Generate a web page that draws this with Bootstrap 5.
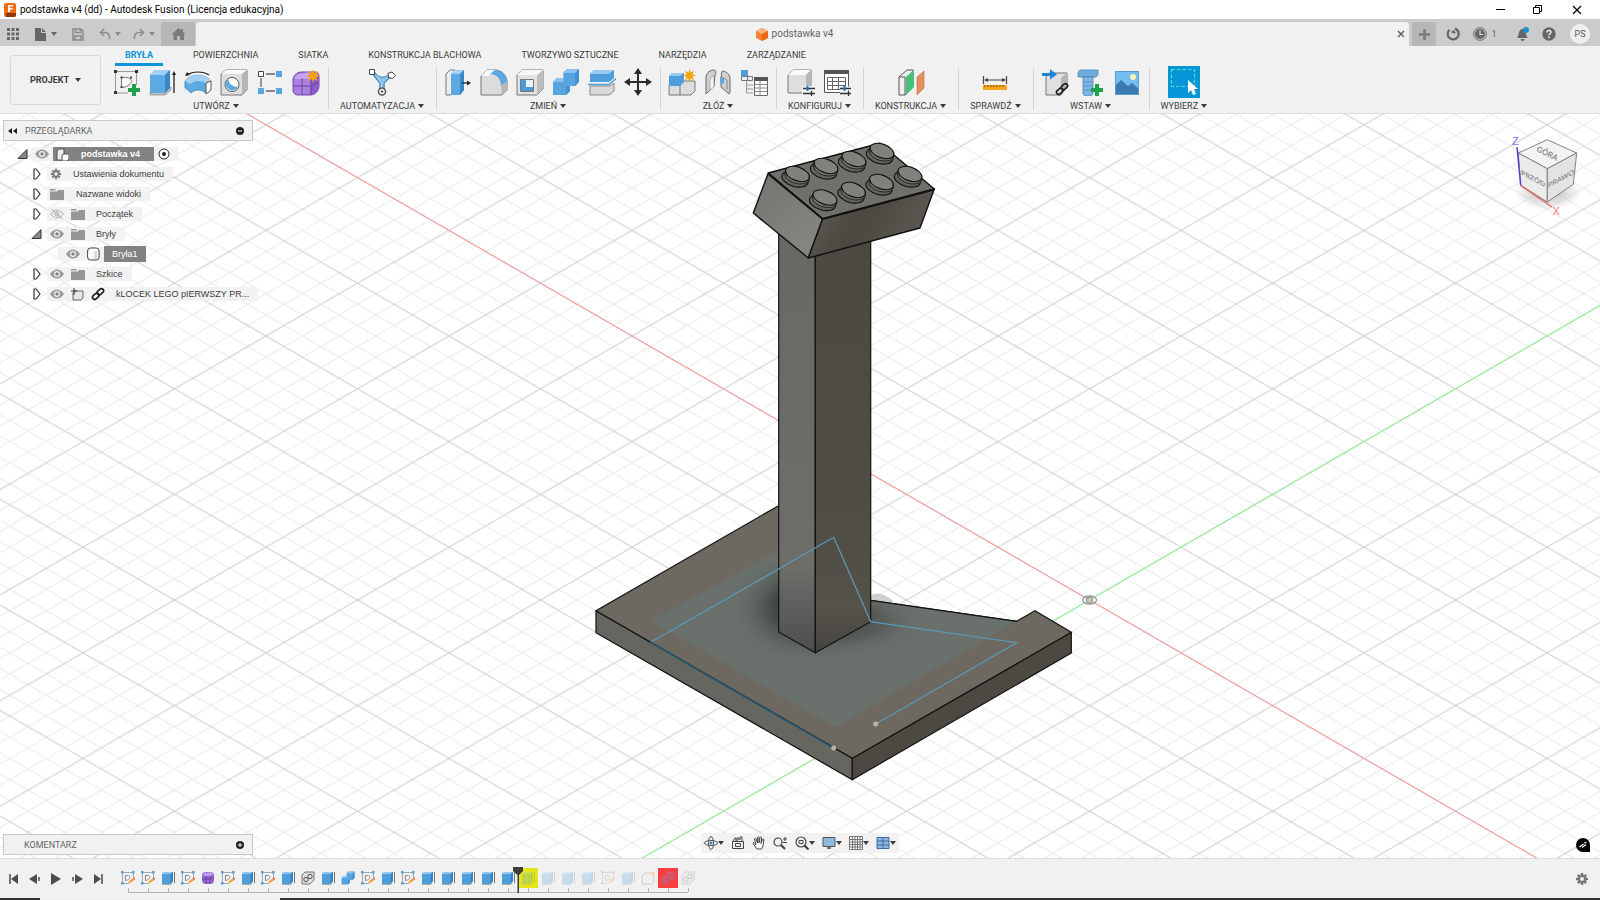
<!DOCTYPE html>
<html lang="pl">
<head>
<meta charset="utf-8">
<meta name="viewport" content="width=device-width, initial-scale=1">
<title>podstawka v4 (dd) - Autodesk Fusion (Licencja edukacyjna)</title>
<link rel="stylesheet" href="https://cdn.jsdelivr.net/npm/bootstrap@5.3.0/dist/css/bootstrap.min.css">
<style>
  :root { --chrome: #f1f1f1; --strip: #cbcbcb; --ink: #3c3c3c; --accent: #0a96d9; }
  body { font-family: Roboto, "Liberation Sans", sans-serif; font-size: 9px; line-height: 12px; color: var(--ink); background: #fff; }
  button { border: 0; background: none; padding: 0; color: inherit; font: inherit; line-height: inherit; display: inline-flex; align-items: center; justify-content: center; flex: none; }
  svg { display: block; flex: none; }
  .tri { width: 0; height: 0; border: 3px solid transparent; border-top: 4px solid currentColor; border-bottom: 0; flex: none; }

  .titlebar { height: 19px; font-size: 10px; line-height: 19px; color: #000; }
  .titlebar .win { width: 38px; height: 19px; }
  .strip { height: 27px; background: var(--strip); padding-top: 3px; color: #666; }
  .strip .slot { width: 26px; }
  .strip .dim { color: #8b8b8b; }
  .hometab { width: 34px; margin-left: 6px; background: #b7b7b7; border-radius: 3px 3px 0 0; color: #7a7a7a; }
  .doctab { background: var(--chrome); border-radius: 4px 4px 0 0; font-size: 10px; margin: 0 3px 0 1px; }
  .newtab { width: 24px; background: #b7b7b7; border-radius: 3px 3px 0 0; color: #7a7a7a; }
  .bell { margin-left: 14px; }
  .avatar { width: 20px; height: 20px; border-radius: 50%; background: #eee; color: #555; margin: 0 10px 0 8px; }

  .ribbon { background: var(--chrome); border-bottom: 1px solid #dcdcdc; height: 68px; }
  .project { width: 91px; height: 50px; border: 1px solid #d9d9d9; border-radius: 3px; font-weight: 700; gap: 6px; margin: 9px 3px 0 10px; }
  .tabs { height: 20px; gap: 20px; padding-left: 11px; }
  .tabs button { padding: 0 10px; height: 20px; border-bottom: 3px solid transparent; }
  .tabs button.on { color: var(--accent); border-color: var(--accent); font-weight: 700; }
  .group { padding-top: 2px; position: relative; }
  .group + .group::before { content: ""; width: 1px; background: #d4d4d4; position: absolute; left: 0; top: 2px; bottom: 3px; }
  .group .tools { gap: 8px; padding: 0 8px; height: 28px; }
  .group .name { gap: 3px; height: 14px; margin-top: 3px; padding: 0 12px; }
  .group .picked { width: 32px; height: 32px; background: #0696d7; margin: -2px 0; }

  .canvas3d > svg.scene { position: absolute; inset: 0; width: 100%; height: 100%; }
  .panelbar { width: 250px; height: 21px; background: var(--chrome); border: 1px solid #c9c9c9; color: #666; padding: 0 8px 0 4px; }
  .browser { position: absolute; left: 3px; top: 6px; }
  .comments { position: absolute; left: 3px; bottom: 3px; }
  .cube { position: absolute; right: 8px; top: 16px; }
  .assist { position: absolute; right: 10px; bottom: 6px; }
  .navtools { position: absolute; left: 44%; bottom: 5px; height: 20px; background: rgba(241,241,241,.9); margin-left: -3px; gap: 7px; padding: 0 3px; }
  .tree { font-family: "Liberation Sans", sans-serif; margin: 3px 0 0; padding: 0; list-style: none; }
  .tree li { height: 20px; display: flex; align-items: center; }
  .tree .lv1 { padding-left: 12px; } .tree .lv2 { padding-left: 26px; } .tree .lv3 { padding-left: 55px; }
  .tree .twist { width: 14px; height: 14px; margin-right: 4px; }
  .tree .lv1 .twist { margin-right: 2px; }
  .tree .cell { background: rgba(241,241,241,.9); height: 14px; display: flex; align-items: center; padding: 0 9px 0 3px; }
  .tree .cell svg { margin-right: 7px; }
  .tree .sel { background: #828282; color: #fff; height: 14px; display: flex; align-items: center; padding: 0 10px 0 3px; }

  .timeline { height: 40px; background: var(--chrome); border-top: 1px solid #dcdcdc; padding: 0 11px 0 3px; color: #4c4c4c; }
  .timeline .play { width: 21px; height: 20px; }
  .timeline .gear { color: #777; }
  .track { margin-left: 10px; position: relative; height: 34px; padding-top: 9px; align-self: flex-start; }
  .track .step { width: 20px; height: 20px; position: relative; }
  .track .step::after { content: ""; position: absolute; left: 10px; top: 20px; width: 1px; height: 4px; background: #b5b5b5; }
  .track::after { content: ""; position: absolute; left: 10px; right: 10px; top: 33px; height: 1px; background: #b5b5b5; }
  .track .later svg { opacity: .25; }
  .track .warn { background: #e3e619; } .track .warn svg, .track .fail svg { opacity: .25; }
  .track .fail { background: #f93e40; }
  .track .marker { position: absolute; left: 395px; top: 8px; z-index: 1; }
  .taskbar { height: 2px; background: linear-gradient(90deg, #333 40px, #eee 40px 280px, #333 280px); }
</style>
</head>
<body class="vh-100 d-flex flex-column overflow-hidden">

<svg width="0" height="0" class="position-absolute" aria-hidden="true">
  <defs>
    <symbol id="i-sketch" viewBox="0 0 28 28">
      <path d="M3 3.500H25M3.500 3V25.500M24.500 3V17M3 25H16" stroke="#999" fill="none"/>
      <path d="M2 2h3v3H2zM23 2h3v3h-3zM2 23h3v3H2z" fill="#333"/>
      <path d="M9.500 19V9.500h4c4 0 6 2 6 4-1 3-5 6-10 6z" fill="#fafafa" stroke="#777"/><path d="M8.500 8.500h2v2h-2zM18 8.500h2v2h-2zM8.500 18h2v2h-2z" fill="#444"/>
      <path d="M20 16h4v4h4v4h-4v4h-4v-4h-4v-4h4z" fill="#21a04a"/></symbol>
    <symbol id="i-extrude" viewBox="0 0 28 28">
      <path d="M2 24v3h15l6-5v-3z" fill="#bdbdbd" stroke="#888" stroke-width=".7"/>
      <path d="M2 7l5-5h15v18l-5 5H2z" fill="#5fa9e2"/><path d="M2 7l5-5h15l-5 5z" fill="#a3d0f2"/><path d="M17 7l5-5v18l-5 5z" fill="#3987c6"/>
      <path d="M26 25V5" stroke="#222" stroke-width="1.300"/><path d="M24 7l2-4 2 4z" fill="#222"/></symbol>
    <symbol id="i-revolve" viewBox="0 0 28 28">
      <path d="M1 13c6-7 19-8 26 0l-5 12c-5-4-11-4-15 0-1-1-4-4-6-5z" fill="#5fa9e2" stroke="#3579ae" stroke-width=".7"/>
      <path d="M1 13c6-7 19-8 26 0l-4 3c-5-4-12-4-17 0z" fill="#a3d0f2"/><path d="M22 15l5-2v9l-5 4z" fill="#fff" stroke="#555"/>
      <path d="M3 7c6-4 16-4 22 0" stroke="#222" fill="none" stroke-width="1.200"/><path d="M1 8l2-4 3 3z" fill="#222"/></symbol>
    <symbol id="i-hole" viewBox="0 0 28 28">
      <path d="M1 6l5-4h21v20l-5 5H1z" fill="#dedede" stroke="#777"/><path d="M1 6l5-4h21l-5 4z" fill="#fafafa"/><path d="M22 6l5-4v20l-5 5z" fill="#b5b5b5"/>
      <circle cx="12" cy="16.500" r="7" fill="#fff" stroke="#555"/><path d="M8 11a6.500 6.500 0 1 0 10 8c-5 0-9-3-10-8z" fill="#5fa9e2"/></symbol>
    <symbol id="i-pattern" viewBox="0 0 28 28">
      <path d="M5 10v9M10 6h9M10 23h9" stroke="#666" stroke-width="1.300"/><path d="M2.500 3.500h5v5h-5z" fill="#fff" stroke="#444"/>
      <path d="M20 3h6v6h-6zM2 20h6v6H2zM20 20h6v6h-6z" fill="#58a6dd"/></symbol>
    <symbol id="i-form" viewBox="0 0 28 28">
      <path d="M1 11c1-5 5-7 9-7h13c3 0 4 2 4 5v9c0 5-4 9-9 9H6c-3 0-5-2-5-5z" fill="#a97fe0" stroke="#7448ad"/>
      <path d="M3 9c3-4 16-6 23-3-2 4-4 5-7 5H5c-2 0-2-1-2-2z" fill="#c7a6f0"/><path d="M19 11c4-1 6-3 8-5v12c0 5-4 9-9 9z" fill="#8b5bcb"/>
      <path d="M10 10v17M1 18h18l8-4M19 10v17" stroke="#6d43a5" fill="none"/></symbol>
    <symbol id="i-star" viewBox="0 0 14 14"><path d="M7 0l1.300 3.900L12 2l-1.900 3.700L14 7l-3.900 1.300L12 12 8.300 10.100 7 14 5.700 10.100 2 12l1.900-3.700L0 7l3.900-1.300L2 2l3.700 1.900z" fill="#f5a30b"/></symbol>
    <symbol id="i-auto" viewBox="0 0 28 28">
      <path d="M4 5l8 10v8M24 7l-8 8v8M6 4c5 7 11 7 16 2" stroke="#3b86bd" stroke-width="1.400" fill="none"/>
      <path d="M5 5l8 9 1 8 2-8 7-7-9 3z" fill="#8ac1ea"/>
      <path d="M1.500 1.500h5v5h-5z" fill="#fff" stroke="#444"/><path d="M24 4l3.500 3.500-3 3-4-1-.5-4z" fill="#fff" stroke="#444"/>
      <circle cx="14" cy="23.500" r="3.500" fill="#fff" stroke="#555" stroke-width="1.500"/><circle cx="14" cy="23.500" r="1.200" fill="#555"/></symbol>
    <symbol id="i-press" viewBox="0 0 28 28">
      <path d="M2 6l4-4h5v20l-4 5H2z" fill="#eee" stroke="#777"/><path d="M7 6l4-4h9v20l-4 5H7z" fill="#5fa9e2"/><path d="M7 6l4-4h9l-4 4z" fill="#a3d0f2"/><path d="M16 6l4-4v20l-4 5z" fill="#3987c6"/>
      <path d="M18 15h6" stroke="#222" stroke-width="1.300"/><path d="M23 12.500l4 2.500-4 2.500z" fill="#222"/></symbol>
    <symbol id="i-fillet" viewBox="0 0 28 28">
      <path d="M1 8l6-6h8c7 0 12 6 12 12v8l-5 5H1z" fill="#dcdcdc" stroke="#777"/><path d="M1 8l6-6h8l-6 6z" fill="#fafafa"/>
      <path d="M10 6l5-4c7 0 12 6 12 12l-6 4c0-7-4-12-11-12z" fill="#5fa9e2"/><path d="M21 18l6-4v8l-5 5z" fill="#b8b8b8"/></symbol>
    <symbol id="i-shell" viewBox="0 0 28 28">
      <path d="M1 7l5-5h21v19l-6 6H1z" fill="#e2e2e2" stroke="#777"/><path d="M21 7l6-5v19l-6 6z" fill="#bdbdbd"/><path d="M1 7l5-5h21l-6 5z" fill="#f7f7f7"/>
      <path d="M4.500 11.500h13v12h-13z" fill="#fff" stroke="#777"/><path d="M5 12h5v7h7v4H5z" fill="#4f9bd5"/><path d="M10 12h7v7h-7z" fill="#e9f4fc"/></symbol>
    <symbol id="i-combine" viewBox="0 0 28 28">
      <path d="M1 14l4-4h6V5l4-4h12v13l-4 4h-5v5l-4 4H1z" fill="#58a4df"/><path d="M1 14l4-4h6V5l4-4h12l-4 4H12v5l-1 4z" fill="#8cc3ee"/><path d="M23 5l4-4v13l-4 4h-5v5l-4 4v-9h9z" fill="#4492d2"/></symbol>
    <symbol id="i-split" viewBox="0 0 28 28">
      <path d="M2 18v9h19l5-4v-8l-4 3z" fill="#d9d9d9" stroke="#888"/><path d="M2 6l4-4h20v8l-5 4H2z" fill="#4d9edb"/><path d="M2 6l4-4h20l-5 4z" fill="#99caf0"/>
      <path d="M0 16.500h21l7-6" stroke="#4d9edb" stroke-width="1.400" fill="none"/></symbol>
    <symbol id="i-move" viewBox="0 0 28 28">
      <path d="M14 5v18M5 14h18" stroke="#2b2b2b" stroke-width="2"/><path d="M14 0l4 6h-8zM14 28l4-6h-8zM0 14l6-4v8zM28 14l-6-4v8z" fill="#2b2b2b"/></symbol>
    <symbol id="i-newcomp" viewBox="0 0 28 28">
      <path d="M12 17l4-4h11v10l-4 4H1V17z" fill="#dcdcdc" stroke="#777"/><path d="M12 17v10" stroke="#777"/>
      <path d="M1 8l3-3h12v9l-4 4H1z" fill="#4d9edb"/><path d="M1 8l3-3h12l-4 3z" fill="#99caf0"/></symbol>
    <symbol id="i-joint" viewBox="0 0 28 28">
      <path d="M2 10c0-5 3-7 7-8 4 0 3 3 2 5l-1 11-6 6-2 2z" fill="#d0d0d0" stroke="#666"/><path d="M6 11l4-4v12l-4 3z" fill="#f5f5f5" stroke="#888" stroke-width=".6"/>
      <path d="M26 10c-1-5-4-6-7-7-2 0-1 3-2 6v10l8 7 1-2z" fill="#d0d0d0" stroke="#666"/><path d="M18 9l5 3v10" fill="none" stroke="#888"/><path d="M16 10h4v5l-3 2z" fill="#58a6dd"/></symbol>
    <symbol id="i-bom" viewBox="0 0 28 28">
      <path d="M1 2h7v6H1z" fill="#4d9edb"/><path d="M1.500 8.500h6v4h-6zM7.500 8.500h5v4h-5z" fill="#eee" stroke="#777"/>
      <path d="M6.500 13v12M7 17h6M7 21h6M7 25h6" stroke="#999" fill="none"/><path d="M14.500 9.500h13v18h-13z" fill="#fff" stroke="#666"/><path d="M14 9h14v4H14z" fill="#555"/><path d="M15 16.500h12M15 20h12M15 23.500h12M20 13v14" stroke="#888"/></symbol>
    <symbol id="i-cfg" viewBox="0 0 28 28">
      <path d="M1 7l5-5h18v16l-5 7H1z" fill="#dedede" stroke="#777"/><path d="M1 7l5-5h18l-5 5z" fill="#fafafa"/><path d="M19 7l5-5v16l-5 7z" fill="#b8b8b8"/>
      <path d="M15 20.500h13M15 25.500h13" stroke="#f1f1f1" stroke-width="5"/><path d="M16 20.500h12M16 25.500h12M24.500 23v5" stroke="#333" stroke-width="1.300"/><path d="M20.500 18v5" stroke="#0a7fd0" stroke-width="2"/></symbol>
    <symbol id="i-cfgtab" viewBox="0 0 28 28">
      <path d="M1.500 2.500h24v22h-24z" fill="#fff" stroke="#555"/><path d="M1 2h25v4H1z" fill="#555"/><path d="M4.500 9.500h18v12h-18zM4 13.500h18M4 17.500h18M9.500 9v12M15.500 9v12" fill="none" stroke="#666"/>
      <path d="M17 20.500h11M17 25.500h11" stroke="#f1f1f1" stroke-width="4"/><path d="M17 20.500h11M17 25.500h11M25.500 23v5" stroke="#333" stroke-width="1.300"/><path d="M21.500 18v5" stroke="#0a7fd0" stroke-width="2"/></symbol>
    <symbol id="i-plane" viewBox="0 0 28 28">
      <path d="M2 9l8-7h6v17l-8 8H2z" fill="#eee" stroke="#555"/><path d="M2 9h6v18" fill="none" stroke="#555"/><path d="M9 9l8-7v17l-8 8z" fill="#45c07a"/><path d="M20 9l7-6v17l-7 7z" fill="#e2905c" stroke="#b96c3c" stroke-width=".6"/></symbol>
    <symbol id="i-measure" viewBox="0 0 28 28">
      <path d="M2.500 8v8M25.500 8v8M4 12h20" stroke="#444" stroke-width="1.200"/><path d="M3 12l4-2v4zM25 12l-4-2v4z" fill="#444"/><path d="M2 17h24v5H2z" fill="#f5a51a"/><path d="M4 17v2M7 17v2M10 17v2M13 17v2M16 17v2M19 17v2M22 17v2" stroke="#7a4b00"/></symbol>
    <symbol id="i-chain" viewBox="0 0 14 14"><g fill="none" stroke="currentColor" stroke-width="1.700"><rect x="-3.600" y="-2" width="7.200" height="4.200" rx="2.100" transform="translate(9.300 4.700) rotate(-42)"/><rect x="-3.600" y="-2" width="7.200" height="4.200" rx="2.100" transform="translate(4.700 9.200) rotate(-42)"/></g></symbol>
    <symbol id="i-derive" viewBox="0 0 28 28">
      <path d="M5 9l3-4h18v13l-6 9H5z" fill="#e0e0e0" stroke="#777"/><path d="M20 10l6-5v13l-6 8z" fill="#b5b5b5"/><path d="M1 5h8V1l7 5.500-7 5V8H1z" fill="#1b87d6"/></symbol>
    <symbol id="i-bolt" viewBox="0 0 28 28">
      <path d="M1 4l2-2h18v5l-2 2H1z" fill="#6fabdb" stroke="#3f7db0" stroke-width=".7"/><path d="M6 9h10v17l-2 2H8l-2-2z" fill="#7fb6e3" stroke="#3f7db0" stroke-width=".7"/><path d="M6 14h10M6 18h10M6 22h10" stroke="#5793c4"/>
      <path d="M18 16h4v4h4v4h-4v4h-4v-4h-4v-4h4z" fill="#21a04a"/></symbol>
    <symbol id="i-image" viewBox="0 0 28 28">
      <path d="M2 3h24v24H2z" fill="#74bdf0"/><path d="M2 18l6-6 7 6 4-3 7 6v6H2z" fill="#3a7ab0"/><circle cx="20" cy="9" r="3" fill="#fff2b8"/><path d="M2.500 3.500h23v23h-23z" fill="none" stroke="#5a9cce"/></symbol>
    <symbol id="i-pick" viewBox="0 0 32 32"><path d="M3.500 3.500h23v17h-23z" fill="none" stroke="#55e0c0" stroke-width="1.200" stroke-dasharray="3.500 2"/><path d="M20 14v13l3-3 2 5 3-1-2-5h4z" fill="#fff"/></symbol>

    <symbol id="t-sketch" viewBox="0 0 14 14"><path d="M1.500 1.500h11M1.500 1.500v11M12.500 1.500v5M1.500 12.500h6" stroke="#9ab" fill="none"/><path d="M0 0h2.500v2.500H0zM11 0h2.500v2.500H11zM0 11h2.500v2.500H0z" fill="#5aa3c9"/><path d="M4.500 9.500v-5h3c2 1 2 4-3 5z" stroke="#888" fill="#fff"/><path d="M7 13l1-3 4-3 1.500 2L9 12z" fill="#f2a13c"/><path d="M12 7l1-1 1 2-1 1z" fill="#d34a3c"/></symbol>
    <symbol id="t-ext" viewBox="0 0 14 14"><path d="M1 12v2h8l3-2z" fill="#aaa"/><path d="M1 3l2-2h9v9l-3 3H1z" fill="#4d9edb"/><path d="M1 3l2-2h9L9.500 3z" fill="#92c6ee"/><path d="M9.500 3L12 1v9l-2.500 3z" fill="#3785c6"/><path d="M13.500 1v11" stroke="#777"/></symbol>
    <symbol id="t-form" viewBox="0 0 14 14"><rect x="1" y="1" width="12" height="12" rx="4" fill="#9465d2"/><path d="M2 4c2-3 8-3 10-1L9 5H3z" fill="#c5a2ee"/><path d="M1 8h8l4-2M5 5v8M9 5v8" stroke="#613a9b" stroke-width=".8" fill="none"/></symbol>
    <symbol id="t-link" viewBox="0 0 14 14"><path d="M1 4l3-3h9v8l-4 4H1z" fill="#ddd" stroke="#777"/><circle cx="5" cy="8.500" r="2.200" fill="none" stroke="#555"/><circle cx="9" cy="5.500" r="2.200" fill="none" stroke="#555"/></symbol>
    <symbol id="t-fillet" viewBox="0 0 14 14"><path d="M1 5l3-3h3c4 0 6 3 6 6v3l-2 2H1z" fill="#eee" stroke="#666"/><path d="M10 1h4v4h-4z" fill="#f5a30b"/></symbol>

    <symbol id="b-eye" viewBox="0 0 14 10"><path d="M0 5c4-6 10-6 14 0-4 6-10 6-14 0z" fill="#9a9a9a"/><circle cx="7" cy="5" r="3" fill="#f4f4f4"/><circle cx="7" cy="5" r="1.800" fill="#858585"/></symbol>
    <symbol id="b-eyeoff" viewBox="0 0 14 10"><path d="M.7 5c4-5 8.600-5 12.600 0-4 5-8.600 5-12.600 0z" fill="none" stroke="#aaa"/><circle cx="7" cy="5" r="2" fill="none" stroke="#aaa"/><path d="M1.500 0l11 10" stroke="#aaa"/></symbol>
    <symbol id="b-folder" viewBox="0 0 14 12"><path d="M0 1h5l1 1.500H0zM0 3.500h7L8 2h6v10H0z" fill="#969696"/></symbol>
    <symbol id="b-closed" viewBox="0 0 14 14"><path d="M5 2v10h2l4-5-4-5z" fill="#fff" stroke="#333" stroke-width="1.200"/></symbol>
    <symbol id="b-open" viewBox="0 0 14 14"><path d="M12 2.500v9H3z" fill="#888" stroke="#333"/></symbol>
    <symbol id="b-gear" viewBox="0 0 14 14"><g stroke="currentColor" stroke-width="2.500"><path d="M7 1v12M1 7h12M2.800 2.800l8.400 8.400M11.200 2.800l-8.400 8.400"/></g><circle cx="7" cy="7" r="4" fill="currentColor"/><circle cx="7" cy="7" r="2" fill="#f1f1f1"/></symbol>

    <pattern id="grid" patternUnits="userSpaceOnUse" x="1089.500" y="600" width="183" height="105.600">
      <path stroke="#eaeaea" fill="none" d="M0 84.480L36.600 105.600M0 63.360L73.200 105.600M0 42.240L109.800 105.600M0 21.120L146.400 105.600M36.600 0L183 84.480M73.200 0L183 63.360M109.800 0L183 42.240M146.400 0L183 21.120M36.600 0L0 21.120M73.200 0L0 42.240M109.800 0L0 63.360M146.400 0L0 84.480M183 21.120L36.600 105.600M183 42.240L73.200 105.600M183 63.360L109.800 105.600M183 84.480L146.400 105.600"/>
      <path stroke="#c8c8c8" fill="none" d="M0 0L183 105.600M183 0L0 105.600"/>
    </pattern>
    <linearGradient id="colL" x2="0" y2="1"><stop offset="0" stop-color="#686964"/><stop offset=".8" stop-color="#6d6e6a"/><stop offset="1" stop-color="#4d4e4b"/></linearGradient>
    <linearGradient id="colR" x2="0" y2="1"><stop offset="0" stop-color="#4d4841"/><stop offset=".75" stop-color="#514d47"/><stop offset=".9" stop-color="#55514b"/><stop offset="1" stop-color="#454340"/></linearGradient>
    <linearGradient id="brickL" x2=".6" y2="1"><stop offset="0" stop-color="#73746f"/><stop offset="1" stop-color="#85867f"/></linearGradient>
    <linearGradient id="brickR" x2="1" y2=".3"><stop offset="0" stop-color="#5f5d57"/><stop offset=".5" stop-color="#4c4740"/><stop offset="1" stop-color="#5b5852"/></linearGradient>
    <radialGradient id="shade"><stop offset="0" stop-color="#303434"/><stop offset=".4" stop-color="#3c4040" stop-opacity=".85"/><stop offset=".7" stop-color="#555b58" stop-opacity=".35"/><stop offset="1" stop-color="#6b726c" stop-opacity="0"/></radialGradient>
    <clipPath id="topclip"><path d="M651 621L778.700 550V505H815V590L870.700 600.300 1016.700 621.300 835 727.300z"/></clipPath>
    <g id="stud" stroke="#111" stroke-width="1.100">
      <ellipse cx="-1" cy="5.500" rx="13.500" ry="7.500" transform="rotate(16)" fill="#62635d"/>
      <path d="M-12-4L-12.500 1C-10 9 4 12.500 11 8L12 4z" fill="#74756e" stroke-width=".8"/>
      <ellipse rx="12.500" ry="6.800" transform="rotate(20)" fill="#80817a"/>
    </g>
  </defs>
</svg>

<header>
  <div class="titlebar d-flex align-items-center bg-white">
    <svg width="12" height="14" viewBox="0 0 12 14" class="ms-1 me-1"><rect width="12" height="14" rx="2" fill="#ef6c13"/><path d="M2 10h10v2a2 2 0 0 1-2 2H2z" fill="#8e3a06"/><path d="M4 2h5v1.500H6V5h2.500v1.500H6V9H4z" fill="#fff"/></svg>
    <span class="flex-grow-1 text-nowrap">podstawka v4 (dd) - Autodesk Fusion (Licencja edukacyjna)</span>
    <button class="win" aria-label="Minimalizuj"><svg width="10" height="10"><path d="M0 4.500h9" stroke="#000"/></svg></button>
    <button class="win" aria-label="Przywróć"><svg width="12" height="10" viewBox="1 1 12 10"><path d="M1.500 3.500h6v6h-6zM3.500 3V1.500h6v6H8" stroke="#000" fill="none"/></svg></button>
    <button class="win me-1" aria-label="Zamknij"><svg width="10" height="10"><path d="M1 1l8 8M9 1L1 9" stroke="#000" stroke-width="1.200"/></svg></button>
  </div>

  <div class="strip d-flex align-items-stretch">
    <button class="slot" aria-label="Panel danych"><svg width="12" height="12" fill="currentColor"><path d="M0 0h3v3H0zM4.500 0h3v3h-3zM9 0h3v3H9zM0 4.500h3v3H0zM4.500 4.500h3v3h-3zM9 4.500h3v3H9zM0 9h3v3H0zM4.500 9h3v3h-3zM9 9h3v3H9z"/></svg></button>
    <button class="ms-2 gap-1" aria-label="Plik"><svg width="13" height="14"><path d="M1 1h6v5h5v8H1zM8 1l4 4H8z" fill="currentColor"/></svg><span class="tri"></span></button>
    <button class="slot dim ms-2" aria-label="Zapisz"><svg width="12" height="13"><path d="M1 1h8l2 2v9H1zM3.500 1v3.500h5V1M3 12V8h6v4" stroke="currentColor" stroke-width="1.500" fill="none"/></svg></button>
    <button class="dim ms-2 gap-1" aria-label="Cofnij"><svg width="12" height="12"><path d="M5 1L1.500 4.500 5 8M2 4.500h4c3 0 5 2 4.500 6.500" stroke="currentColor" stroke-width="1.500" fill="none"/></svg><span class="tri"></span></button>
    <button class="dim ms-2 gap-1 ps-1" aria-label="Ponów"><svg width="12" height="12"><path d="M7 1l3.500 3.500L7 8M10 4.500H6C3 4.500 1 6.500 1.500 11" stroke="currentColor" stroke-width="1.500" fill="none"/></svg><span class="tri"></span></button>
    <button class="hometab" aria-label="Strona główna"><svg width="13" height="12"><path d="M0 6l6.500-6L9 2.200V1h2v3l2 2-1 1v5H8V8H5v4H1.500V7z" fill="currentColor"/></svg></button>
    <div class="doctab flex-grow-1 d-flex align-items-center">
      <button class="flex-grow-1 gap-1"><svg width="12" height="13"><path d="M6 0l6 3v7l-6 3-6-3V3z" fill="#f58233"/><path d="M6 0l6 3-6 3-6-3z" fill="#fbb37c"/><path d="M6 6l6-3v7l-6 3z" fill="#ee6716"/></svg>podstawka v4</button>
      <button class="px-1" aria-label="Zamknij kartę"><svg width="8" height="8"><path d="M1 1l6 6M7 1L1 7" stroke="#555" stroke-width="1.200"/></svg></button>
    </div>
    <button class="newtab" aria-label="Nowa karta"><svg width="11" height="11"><path d="M5.500 0v11M0 5.500h11" stroke="currentColor" stroke-width="2.500"/></svg></button>
    <button class="slot ms-1" aria-label="Rozszerzenia"><svg width="14" height="14"><path d="M10.500 2.500A5.500 5.500 0 1 1 3.500 2.800M9 1.500A5.500 5.500 0 0 1 12.500 7" stroke="currentColor" stroke-width="2.200" fill="none"/><path d="M5 5l3-2 2 3-3 .5z" fill="currentColor"/></svg></button>
    <button class="slot gap-1 ms-1 ps-1" aria-label="Stan zadań"><svg width="14" height="14"><circle cx="7" cy="7" r="6.300" fill="none" stroke="currentColor"/><circle cx="7" cy="7" r="5" fill="currentColor"/><path d="M7 3.500V7.500h3" stroke="#ddd" stroke-width="1.200" fill="none"/></svg>1</button>
    <button class="slot bell" aria-label="Powiadomienia"><svg width="14" height="14"><path d="M1 11c2-2 1-8 5-9 5 0 3 7 6 9zM4.500 12h4a2 2 0 0 1-4 0z" fill="currentColor"/><circle cx="10" cy="3" r="3" fill="#1793d1"/></svg></button>
    <button class="slot" aria-label="Pomoc"><svg width="14" height="14"><circle cx="7" cy="7" r="6.700" fill="currentColor"/><path d="M5 5.500C5 2.800 9 3 9 5.300 9 6.800 7 6.800 7 8.500M7 9.500v1.700" stroke="#eee" stroke-width="1.500" fill="none"/></svg></button>
    <button class="avatar align-self-center" aria-label="Profil">PS</button>
  </div>

  <div class="ribbon d-flex">
    <button class="project">PROJEKT <span class="tri"></span></button>
    <div class="flex-grow-1">
      <nav class="tabs d-flex" aria-label="Karty wstążki">
        <button class="on">BRYŁA</button><button>POWIERZCHNIA</button><button>SIATKA</button><button>KONSTRUKCJA BLACHOWA</button><button>TWORZYWO SZTUCZNE</button><button>NARZĘDZIA</button><button>ZARZĄDZANIE</button>
      </nav>
      <div class="d-flex">
        <div class="group d-flex flex-column align-items-center">
          <div class="tools d-flex">
            <button aria-label="Utwórz szkic"><svg width="28" height="28"><use href="#i-sketch"/></svg></button>
            <button aria-label="Wyciągnięcie"><svg width="28" height="28"><use href="#i-extrude"/></svg></button>
            <button aria-label="Obrót"><svg width="28" height="28"><use href="#i-revolve"/></svg></button>
            <button aria-label="Otwór"><svg width="28" height="28"><use href="#i-hole"/></svg></button>
            <button aria-label="Szyk"><svg width="28" height="28"><use href="#i-pattern"/></svg></button>
            <button aria-label="Forma"><svg width="28" height="28"><use href="#i-form"/><use href="#i-star" x="14" y="1" width="14" height="14"/></svg></button>
          </div><button class="name">UTWÓRZ<span class="tri"></span></button>
        </div>
        <div class="group d-flex flex-column align-items-center">
          <div class="tools d-flex"><button aria-label="Automatyzacja"><svg width="28" height="28"><use href="#i-auto"/></svg></button></div>
          <button class="name">AUTOMATYZACJA<span class="tri"></span></button>
        </div>
        <div class="group d-flex flex-column align-items-center">
          <div class="tools d-flex">
            <button aria-label="Naciśnij/ciągnij"><svg width="28" height="28"><use href="#i-press"/></svg></button>
            <button aria-label="Zaokrąglenie"><svg width="28" height="28"><use href="#i-fillet"/></svg></button>
            <button aria-label="Skorupa"><svg width="28" height="28"><use href="#i-shell"/></svg></button>
            <button aria-label="Połącz"><svg width="28" height="28"><use href="#i-combine"/></svg></button>
            <button aria-label="Podziel"><svg width="28" height="28"><use href="#i-split"/></svg></button>
            <button aria-label="Przesuń"><svg width="28" height="28"><use href="#i-move"/></svg></button>
          </div><button class="name">ZMIEŃ<span class="tri"></span></button>
        </div>
        <div class="group d-flex flex-column align-items-center">
          <div class="tools d-flex">
            <button aria-label="Nowy komponent"><svg width="28" height="28"><use href="#i-newcomp"/><use href="#i-star" x="15" y="1" width="13" height="13"/></svg></button>
            <button aria-label="Połączenie"><svg width="28" height="28"><use href="#i-joint"/></svg></button>
            <button aria-label="Lista części"><svg width="28" height="28"><use href="#i-bom"/></svg></button>
          </div><button class="name">ZŁÓŻ<span class="tri"></span></button>
        </div>
        <div class="group d-flex flex-column align-items-center">
          <div class="tools d-flex">
            <button aria-label="Konfiguracja"><svg width="28" height="28"><use href="#i-cfg"/></svg></button>
            <button aria-label="Tabela konfiguracji"><svg width="28" height="28"><use href="#i-cfgtab"/></svg></button>
          </div><button class="name">KONFIGURUJ<span class="tri"></span></button>
        </div>
        <div class="group d-flex flex-column align-items-center">
          <div class="tools d-flex"><button aria-label="Płaszczyzna"><svg width="28" height="28"><use href="#i-plane"/></svg></button></div>
          <button class="name">KONSTRUKCJA<span class="tri"></span></button>
        </div>
        <div class="group d-flex flex-column align-items-center">
          <div class="tools d-flex"><button aria-label="Zmierz"><svg width="28" height="28"><use href="#i-measure"/></svg></button></div>
          <button class="name">SPRAWDŹ<span class="tri"></span></button>
        </div>
        <div class="group d-flex flex-column align-items-center">
          <div class="tools d-flex">
            <button aria-label="Wstaw pochodną"><svg width="28" height="28" color="#222"><use href="#i-derive"/><use href="#i-chain" x="14" y="14" width="14" height="14"/></svg></button>
            <button aria-label="Wstaw łącznik"><svg width="28" height="28"><use href="#i-bolt"/></svg></button>
            <button aria-label="Wstaw obraz"><svg width="28" height="28"><use href="#i-image"/></svg></button>
          </div><button class="name">WSTAW<span class="tri"></span></button>
        </div>
        <div class="group d-flex flex-column align-items-center">
          <div class="tools d-flex"><button class="picked" aria-label="Wybierz"><svg width="32" height="32"><use href="#i-pick"/></svg></button></div>
          <button class="name">WYBIERZ<span class="tri"></span></button>
        </div>
      </div>
    </div>
  </div>
</header>

<main class="canvas3d flex-grow-1 position-relative overflow-hidden">
  <svg class="scene" viewBox="0 114 1600 744" preserveAspectRatio="xMidYMid slice" role="img" aria-label="Model podstawka v4">
    <rect x="-400" y="-200" width="2400" height="1400" fill="url(#grid)"/>
    <path d="M-8.500-33.600L2004.500 1128" stroke="#ff9292" fill="none"/>
    <path d="M-8.500 1233.600L1821.500 177.600" stroke="#85f585" fill="none"/>
    <g fill="none" stroke="#999" stroke-width="1.300"><ellipse cx="1089.500" cy="600" rx="7" ry="4"/><ellipse cx="1089.500" cy="600" rx="3" ry="2.500"/></g>
    <path d="M870 596c6-5 16-2 24 6l-24 2z" fill="#bbb" opacity=".7"/>
    <!-- base plate -->
    <g stroke="#111" stroke-width="1.200" stroke-linejoin="round">
      <path d="M596 610.700L852.300 758.300V779.700L596 632.700z" fill="#65665f"/>
      <path d="M852.300 758.300L1071.300 632.300V653L852.300 779.700z" fill="#4c4943"/>
      <path d="M596 610.700L778.700 505.700 870 560V600.300L1016.700 621.300 1035 610.700 1071.300 632.300 852.300 758.300z" fill="#6d6860"/>
    </g>
    <g clip-path="url(#topclip)"><rect x="640" y="490" width="400" height="250" fill="#6a706b"/>
      <ellipse cx="808" cy="608" rx="86" ry="62" fill="url(#shade)"/><ellipse cx="850" cy="622" rx="85" ry="38" fill="url(#shade)" opacity=".45"/></g>
    <path d="M870.700 600.300L1016.700 621.300" stroke="#111" stroke-width="1.200"/>
    <!-- column -->
    <g stroke="#111" stroke-width="1.200">
      <path d="M778.700 232L815.300 250V652.700L778.700 632z" fill="url(#colL)"/>
      <path d="M815.300 250L870.700 235V621.700L815.300 652.700z" fill="url(#colR)"/>
    </g>
    <!-- brick -->
    <g stroke="#111" stroke-width="1.400" stroke-linejoin="round">
      <path d="M768.300 173L822.700 218.700 808.300 258 753.300 213z" fill="url(#brickL)"/>
      <path d="M822.700 218.700L934.300 189 920 228 808.300 258z" fill="url(#brickR)"/>
      <path d="M768.300 173L880 143.300 934.300 189 822.700 218.700z" fill="#6f706a"/>
    </g>
    <path d="M769 174.500L822.700 219 934 189.500" fill="none" stroke="#111" stroke-width="2"/>
    <use href="#stud" x="882" y="151"/><use href="#stud" x="854" y="159"/><use href="#stud" x="826" y="166"/><use href="#stud" x="797.500" y="174"/>
    <use href="#stud" x="910" y="174"/><use href="#stud" x="881.500" y="182"/><use href="#stud" x="853.500" y="190"/><use href="#stud" x="825" y="197.500"/>
    <!-- sketch lines -->
    <path d="M650.700 642.300L833.700 537.300 870.700 621.700 1016.700 642.700 875.700 724" stroke="#5a9ab6" stroke-width="1.300" fill="none"/>
    <path d="M650.700 642.300L833.700 748" stroke="#235d7c" stroke-width="1.400"/>
    <circle cx="875.700" cy="724" r="2.500" fill="#b5b5b0"/><circle cx="833.700" cy="748" r="2.500" fill="#b5b5b0"/>
  </svg>

  <section class="browser">
    <div class="panelbar d-flex align-items-center">
      <svg width="9" height="6"><path d="M4 0v6L0 3zM9 0v6L5 3z" fill="#222"/></svg>
      <span class="flex-grow-1 ms-2">PRZEGLĄDARKA</span>
      <button aria-label="Zwiń"><svg width="8" height="8"><circle cx="4" cy="4" r="4" fill="#222"/><path d="M2 4h4" stroke="#fff"/></svg></button>
    </div>
    <ul class="tree">
      <li class="lv1"><svg class="twist"><use href="#b-open"/></svg>
        <div class="cell pe-1 ps-1"><svg width="14" height="10" class="me-1"><use href="#b-eye"/></svg>
          <div class="sel ms-0 fw-bold"><svg width="13" height="13" class="me-2"><path d="M1 3l2-2h5v11H1z" fill="#eee" stroke="#555"/><path d="M6 7l2-1h5v5l-2 2H6z" fill="#fff" stroke="#555"/></svg><span class="px-1">podstawka v4</span></div>
          <svg width="12" height="12" class="ms-1 me-1"><circle cx="6" cy="6" r="5" fill="#fff" stroke="#222"/><circle cx="6" cy="6" r="2" fill="#222"/></svg></div></li>
      <li class="lv2"><svg class="twist"><use href="#b-closed"/></svg><div class="cell"><svg width="12" height="12" color="#7d7d7d"><use href="#b-gear"/></svg><span class="ps-1">Ustawienia dokumentu</span></div></li>
      <li class="lv2"><svg class="twist"><use href="#b-closed"/></svg><div class="cell"><svg width="14" height="12" class="me-2"><use href="#b-folder"/></svg><span class="ps-1">Nazwane widoki</span></div></li>
      <li class="lv2"><svg class="twist"><use href="#b-closed"/></svg><div class="cell"><svg width="14" height="10"><use href="#b-eyeoff"/></svg><svg width="14" height="12"><use href="#b-folder"/></svg><span class="ps-1">Początek</span></div></li>
      <li class="lv2"><svg class="twist"><use href="#b-open"/></svg><div class="cell"><svg width="14" height="10"><use href="#b-eye"/></svg><svg width="14" height="12"><use href="#b-folder"/></svg><span class="ps-1">Bryły</span></div></li>
      <li class="lv3"><div class="cell pe-0 ps-1"><svg width="14" height="10" class="ms-1"><use href="#b-eye"/></svg><svg width="13" height="14" class="me-1"><rect x=".6" y="1" width="11.500" height="12" rx="3" fill="#fff" stroke="#444"/><path d="M7 4h3v8H7z" fill="#ddd"/></svg></div><div class="sel px-2 py-2">Bryła1</div></li>
      <li class="lv2"><svg class="twist"><use href="#b-closed"/></svg><div class="cell"><svg width="14" height="10"><use href="#b-eye"/></svg><svg width="14" height="12"><use href="#b-folder"/></svg><span class="ps-1">Szkice</span></div></li>
      <li class="lv2"><svg class="twist"><use href="#b-closed"/></svg><div class="cell"><svg width="14" height="10"><use href="#b-eye"/></svg><svg width="13" height="13"><path d="M2 5l2-2h8v7l-2 2H2z" fill="#e6e6e6" stroke="#666"/><path d="M3 0v7M0 3h6" stroke="#333"/></svg><svg width="14" height="14" color="#222"><use href="#i-chain"/></svg><span class="ps-1">kLOCEK LEGO pIERWSZY PR...</span></div></li>
    </ul>
  </section>

  <svg class="cube" width="80" height="90" viewBox="1512 130 80 90" aria-label="Kostka widoku">
    <defs><radialGradient id="soft"><stop offset="0" stop-color="#999" stop-opacity=".7"/><stop offset="1" stop-color="#999" stop-opacity="0"/></radialGradient></defs>
    <ellipse cx="1548" cy="192" rx="34" ry="18" fill="url(#soft)"/>
    <g stroke="#777" stroke-width=".9" stroke-linejoin="round">
      <path d="M1518.300 153L1547.300 139.700 1576.700 153 1547.300 168.700z" fill="#f3f3f3"/>
      <path d="M1518.300 153L1547.300 168.700V202L1520.700 185.300z" fill="#ebebeb"/>
      <path d="M1547.300 168.700L1576.700 153 1573.300 184.300 1547.300 202z" fill="#e3e3e3"/></g>
    <g font-size="8" font-weight="700" fill="#8c8c8c" text-anchor="middle" font-family="Lato, sans-serif">
      <text transform="translate(1546 156) rotate(26)">GÓRA</text>
      <text transform="translate(1533 181) skewY(28)" font-size="7">PRZÓD</text>
      <text transform="translate(1561 181) skewY(-28)" font-size="7">PRAWO</text></g>
    <path d="M1517 147L1520.700 185.300" stroke="#4b46d8" stroke-width="1.500"/><path d="M1520.700 185.300L1552 207" stroke="#e06a6a" stroke-width="1.500"/>
    <g font-family="Liberation Sans, sans-serif" font-size="11"><text x="1512" y="145" fill="#7a70f5">Z</text><text x="1552.500" y="215" fill="#ff7676">X</text></g>
  </svg>

  <section class="comments panelbar d-flex align-items-center">
    <span class="flex-grow-1 ms-3">KOMENTARZ</span>
    <button aria-label="Rozwiń"><svg width="8" height="8"><circle cx="4" cy="4" r="4" fill="#222"/><path d="M2 4h4M4 2v4" stroke="#fff"/></svg></button>
  </section>

  <div class="navtools d-flex align-items-center" role="toolbar" aria-label="Nawigacja">
    <button aria-label="Orbita"><svg width="14" height="14"><ellipse cx="7" cy="7" rx="6.500" ry="2.500" fill="none" stroke="#555"/><ellipse cx="7" cy="7" rx="2.500" ry="6.500" fill="none" stroke="#555"/><circle cx="7" cy="7" r="1.500" fill="#2a87cf"/></svg><span class="tri"></span></button>
    <button aria-label="Patrz na"><svg width="14" height="14"><path d="M1.500 5.500h11v7h-11zM4.500 7.500h5v3h-5zM2 5l2-3h1v3M6 5V2h2v2M9 4V1h2v4" fill="none" stroke="#444"/></svg></button>
    <button aria-label="Przesuń widok"><svg width="14" height="14"><path d="M5 13L1 7.500c0-1 1-1.500 2 0L4 9 2.500 3c0-1 1.300-1 1.600 0L5.500 7V1.500c0-1 1.500-1 1.500 0V7l1-5.500c.3-1 1.500-.7 1.500.3L9 7.500l1.500-4c.5-1 1.600-.5 1.400.5L11 10l-1.500 3z" fill="#fff" stroke="#444"/></svg></button>
    <button aria-label="Powiększ"><svg width="15" height="14"><circle cx="5" cy="6" r="4" fill="none" stroke="#444" stroke-width="1.200"/><path d="M8 9l4 4" stroke="#444" stroke-width="2.200"/><path d="M10 3h4M12 1v4M10 6.500h4" stroke="#444"/></svg></button>
    <button aria-label="Dopasuj"><svg width="14" height="14"><circle cx="6" cy="6" r="5" fill="none" stroke="#444" stroke-width="1.200"/><path d="M4 4.500h4v3H4z" fill="none" stroke="#444"/><path d="M9.500 9.500l4 4" stroke="#444" stroke-width="2.200"/></svg><span class="tri"></span></button>
    <button aria-label="Wyświetlanie"><svg width="14" height="14"><path d="M1 1.500h12v9H1z" fill="#8db9e0" stroke="#555"/><path d="M5 11h4v2H5z" fill="#777"/></svg><span class="tri"></span></button>
    <button aria-label="Siatka"><svg width="14" height="14"><path d="M.5.500h13v13H.5zM3.500 0v14M6 0v14M8.500 0v14M11 0v14M0 3.500h14M0 6h14M0 8.500h14M0 11h14" fill="#fff" stroke="#777"/></svg><span class="tri"></span></button>
    <button aria-label="Rzutnie"><svg width="14" height="14"><path d="M1 1.500h12v11H1z" fill="#8db9e0" stroke="#3c6c9b"/><path d="M7 1v12M1 5h12M1 9h12" stroke="#3c6c9b"/></svg><span class="tri"></span></button>
  </div>
  <button class="assist" aria-label="Asystent"><svg width="14" height="14"><path d="M7 0a7 7 0 0 1 7 7v7H7A7 7 0 0 1 7 0z" fill="#000"/><path d="M3.500 9l4-3M6 9.500l4-3M8 5l2.500-.5" stroke="#fff" stroke-width="1.200"/></svg></button>
</main>

<footer>
  <div class="timeline d-flex align-items-center">
    <button class="play" aria-label="Początek"><svg width="10" height="12"><path d="M1 1v10" stroke="currentColor" stroke-width="1.500"/><path d="M9 1v10L2 6z" fill="currentColor"/></svg></button>
    <button class="play" aria-label="Krok wstecz"><svg width="12" height="12"><path d="M8 1v10L0 6z" fill="currentColor"/><path d="M10 4v4" stroke="currentColor" stroke-width="1.500"/></svg></button>
    <button class="play" aria-label="Odtwórz"><svg width="10" height="12"><path d="M0 0v12l10-6z" fill="currentColor"/></svg></button>
    <button class="play" aria-label="Krok naprzód"><svg width="12" height="12"><path d="M4 1v10l8-5z" fill="currentColor"/><path d="M2 4v4" stroke="currentColor" stroke-width="1.500"/></svg></button>
    <button class="play" aria-label="Koniec"><svg width="10" height="12"><path d="M9 1v10" stroke="currentColor" stroke-width="1.500"/><path d="M1 1v10l7-5z" fill="currentColor"/></svg></button>
    <div class="track d-flex">
      <button class="step" aria-label="Szkic1"><svg width="14" height="14"><use href="#t-sketch"/></svg></button>
      <button class="step" aria-label="Szkic2"><svg width="14" height="14"><use href="#t-sketch"/></svg></button>
      <button class="step" aria-label="Wyciągnięcie1"><svg width="14" height="14"><use href="#t-ext"/></svg></button>
      <button class="step" aria-label="Szkic3"><svg width="14" height="14"><use href="#t-sketch"/></svg></button>
      <button class="step" aria-label="Forma1"><svg width="14" height="14"><use href="#t-form"/></svg></button>
      <button class="step" aria-label="Szkic4"><svg width="14" height="14"><use href="#t-sketch"/></svg></button>
      <button class="step" aria-label="Wyciągnięcie2"><svg width="14" height="14"><use href="#t-ext"/></svg></button>
      <button class="step" aria-label="Szkic5"><svg width="14" height="14"><use href="#t-sketch"/></svg></button>
      <button class="step" aria-label="Wyciągnięcie3"><svg width="14" height="14"><use href="#t-ext"/></svg></button>
      <button class="step" aria-label="Wstawienie1"><svg width="14" height="14"><use href="#t-link"/></svg></button>
      <button class="step" aria-label="Wyciągnięcie4"><svg width="14" height="14"><use href="#t-ext"/></svg></button>
      <button class="step" aria-label="Połącz1"><svg width="14" height="14"><use href="#i-combine"/></svg></button>
      <button class="step" aria-label="Szkic6"><svg width="14" height="14"><use href="#t-sketch"/></svg></button>
      <button class="step" aria-label="Wyciągnięcie5"><svg width="14" height="14"><use href="#t-ext"/></svg></button>
      <button class="step" aria-label="Szkic7"><svg width="14" height="14"><use href="#t-sketch"/></svg></button>
      <button class="step" aria-label="Wyciągnięcie6"><svg width="14" height="14"><use href="#t-ext"/></svg></button>
      <button class="step" aria-label="Wyciągnięcie7"><svg width="14" height="14"><use href="#t-ext"/></svg></button>
      <button class="step" aria-label="Wyciągnięcie8"><svg width="14" height="14"><use href="#t-ext"/></svg></button>
      <button class="step" aria-label="Wyciągnięcie9"><svg width="14" height="14"><use href="#t-ext"/></svg></button>
      <button class="step" aria-label="Wyciągnięcie10"><svg width="14" height="14"><use href="#t-ext"/></svg></button>
      <button class="step warn" aria-label="Wyciągnięcie11"><svg width="14" height="14"><use href="#t-ext"/></svg></button>
      <button class="step later" aria-label="Wyciągnięcie12"><svg width="14" height="14"><use href="#t-ext"/></svg></button>
      <button class="step later" aria-label="Wyciągnięcie13"><svg width="14" height="14"><use href="#t-ext"/></svg></button>
      <button class="step later" aria-label="Wyciągnięcie14"><svg width="14" height="14"><use href="#t-ext"/></svg></button>
      <button class="step later" aria-label="Szkic8"><svg width="14" height="14"><use href="#t-sketch"/></svg></button>
      <button class="step later" aria-label="Wyciągnięcie15"><svg width="14" height="14"><use href="#t-ext"/></svg></button>
      <button class="step later" aria-label="Zaokrąglenie1"><svg width="14" height="14"><use href="#t-fillet"/></svg></button>
      <button class="step fail" aria-label="Połącz2"><svg width="14" height="14"><use href="#i-combine"/></svg></button>
      <button class="step later" aria-label="Wstawienie2"><svg width="14" height="14"><use href="#t-link"/></svg></button>
      <svg class="marker" width="10" height="26"><path d="M0 0h10v4L6 8v18H4.500V8L0 4z" fill="#3d3d3d"/></svg>
    </div>
    <button class="gear ms-auto" aria-label="Ustawienia"><svg width="14" height="14"><use href="#b-gear"/></svg></button>
  </div>
  <div class="taskbar"></div>
</footer>
<script src="https://cdn.jsdelivr.net/npm/bootstrap@5.3.0/dist/js/bootstrap.bundle.min.js"></script>
</body>
</html>
